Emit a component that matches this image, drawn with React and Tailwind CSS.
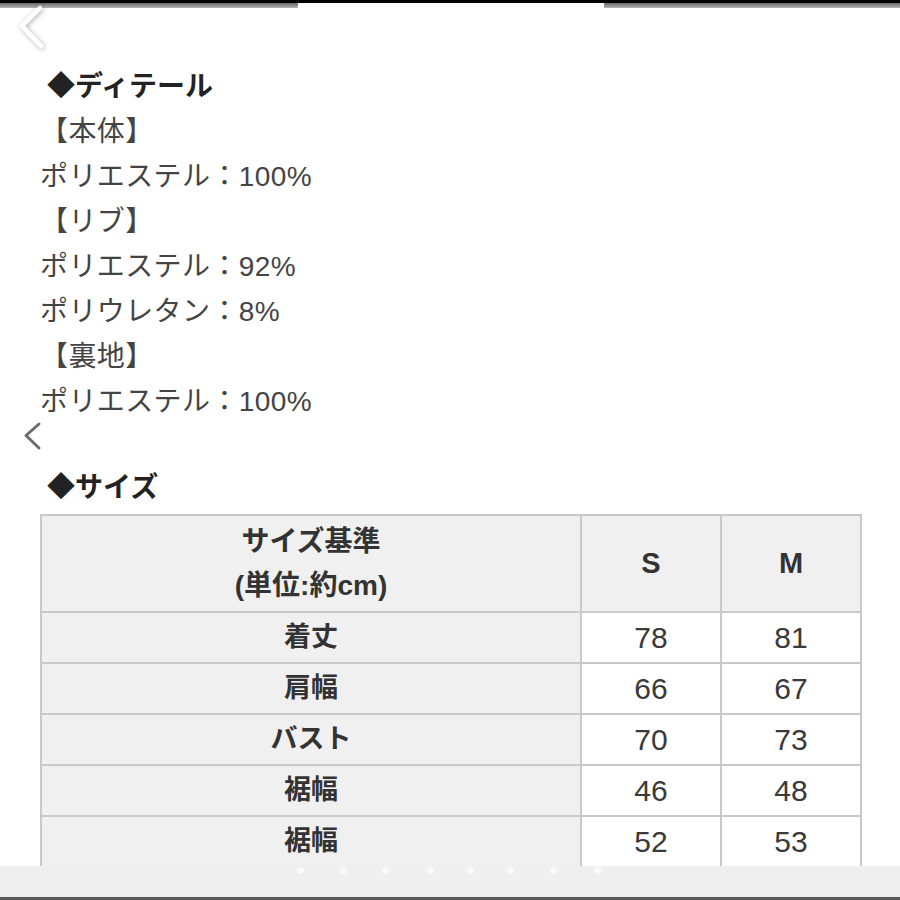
import React from 'react';

const font = { fontFamily: '"Liberation Sans", "Noto Sans CJK JP", sans-serif' };

const detailLines = [
    { text: "◆ディテール", kind: "title" },
    { text: "【本体】", kind: "label" },
    { text: "ポリエステル：100%", kind: "body" },
    { text: "【リブ】", kind: "label" },
    { text: "ポリエステル：92%", kind: "body" },
    { text: "ポリウレタン：8%", kind: "body" },
    { text: "【裏地】", kind: "label" },
    { text: "ポリエステル：100%", kind: "body" },
];

const rows = [
    { name: "着丈", s: "78", m: "81" },
    { name: "肩幅", s: "66", m: "67" },
    { name: "バスト", s: "70", m: "73" },
    { name: "裾幅", s: "46", m: "48" },
    { name: "裾幅", s: "52", m: "53" },
];

const dots = [300, 343, 385, 430, 470, 510, 553, 597];

const App = () => {
    return (
        <div className="relative w-[900px] h-[900px] overflow-hidden bg-white text-[#3a3a3a]" style={font}>
            {/* top bar */}
            <div className="h-[3px] bg-black" />
            <div className="flex h-[5px]">
                <div className="w-[298px] bg-gradient-to-b from-[#6a6a6a] to-[#b5b5b5]" />
                <div className="flex-1 bg-white" />
                <div className="w-[296px] bg-gradient-to-b from-[#6a6a6a] to-[#b5b5b5]" />
            </div>

            {/* back chevron overlay */}
            <svg className="absolute left-[12px] top-[2px]" width="44" height="52" viewBox="0 0 44 52">
                <defs>
                    <filter id="sh" x="-50%" y="-50%" width="200%" height="200%">
                        <feDropShadow dx="1" dy="1" stdDeviation="2.5" floodColor="#000" floodOpacity="0.35" />
                    </filter>
                </defs>
                <path d="M28 6 L10 24 L29 44" fill="none" stroke="#fff" strokeWidth="4.5" strokeLinecap="round" strokeLinejoin="round" filter="url(#sh)" />
            </svg>

            <div className="pl-[40px] mt-[56px]">
                {detailLines.map((line, i) => (
                    <div
                        key={i}
                        className={
                            line.kind === "title"
                                ? "h-[45px] leading-[45px] text-[28px] font-bold text-[#222] pl-[7px]"
                                : "h-[45px] leading-[45px] text-[28px] text-[#444] tracking-[0.4px]"
                        }
                    >
                        {line.text}
                    </div>
                ))}
            </div>

            {/* gallery chevron */}
            <div className="pl-[22px] h-[26px]">
                <svg width="24" height="30" viewBox="0 0 24 30" className="-mt-[3px]">
                    <path d="M17 3 L4 14.5 L17 27" fill="none" stroke="#6b6b6b" strokeWidth="3" strokeLinecap="round" strokeLinejoin="round" />
                </svg>
            </div>

            <div className="pl-[47px] mt-[18px] h-[45px] leading-[45px] text-[28px] font-bold text-[#222]">
                ◆サイズ
            </div>

            <table className="ml-[40px] mt-[4px] border-collapse text-[#333]">
                <thead>
                    <tr className="h-[97px] bg-[#f0f0f0]">
                        <th className="w-[540px] border-2 border-[#c9c9c9] text-[28px] font-bold leading-[44px]">
                            サイズ基準<br />(単位:約cm)
                        </th>
                        <th className="w-[140px] border-2 border-[#c9c9c9] text-[29px] font-bold">S</th>
                        <th className="w-[140px] border-2 border-[#c9c9c9] text-[29px] font-bold">M</th>
                    </tr>
                </thead>
                <tbody>
                    {rows.map((row, i) => (
                        <tr key={i} className="h-[51px]">
                            <td className="bg-[#f0f0f0] border-2 border-[#c9c9c9] text-center text-[27px] font-bold">{row.name}</td>
                            <td className="bg-white border-2 border-[#c9c9c9] text-center text-[30px] text-[#3a3a3a]">{row.s}</td>
                            <td className="bg-white border-2 border-[#c9c9c9] text-center text-[30px] text-[#3a3a3a]">{row.m}</td>
                        </tr>
                    ))}
                </tbody>
            </table>

            {/* bottom pager strip overlay */}
            <div className="absolute left-0 bottom-0 w-[900px] h-[34px] bg-[#efefef] border-b-[3px] border-[#5a5a5a]">
                {dots.map((x) => (
                    <span
                        key={x}
                        className="absolute top-[1px] w-[7px] h-[7px] rounded-full bg-white opacity-70"
                        style={{ left: x - 3 }}
                    />
                ))}
            </div>
        </div>
    );
};

export default App;
